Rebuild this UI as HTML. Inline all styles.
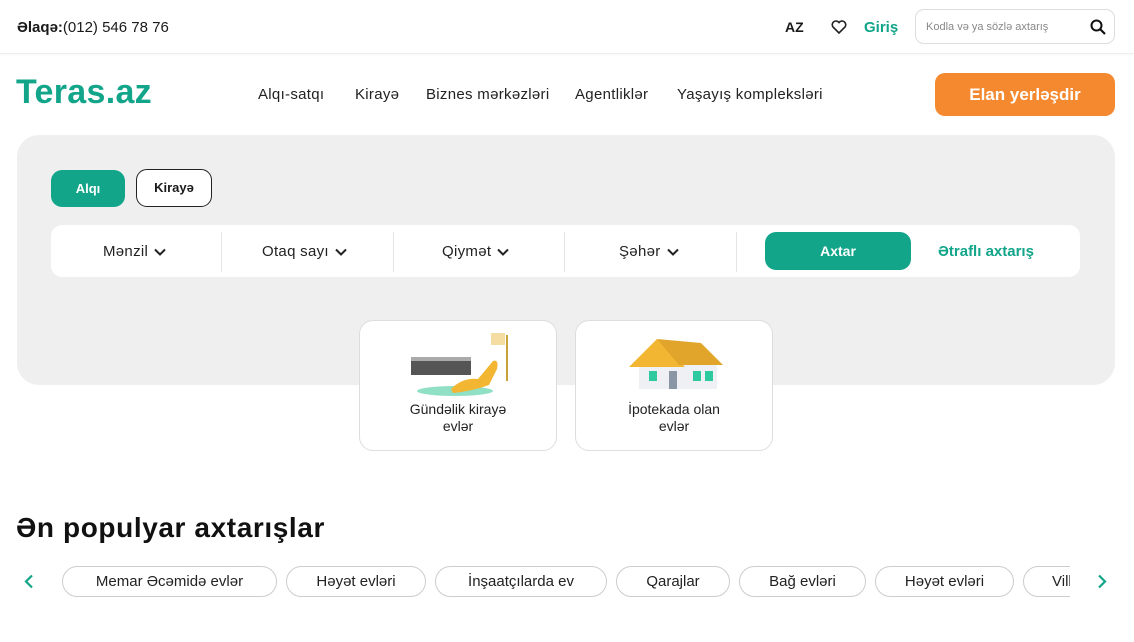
<!DOCTYPE html>
<html><head><meta charset="utf-8"><style>
*{margin:0;padding:0;box-sizing:border-box}
body{width:1134px;height:642px;overflow:hidden;background:#fff;font-family:"Liberation Sans",sans-serif;color:#1a1a1a;position:relative}
.abs{position:absolute}
.top{height:54px;border-bottom:1px solid #eee;box-shadow:0 1px 3px rgba(0,0,0,.04)}
.nav a{position:absolute;top:86px;font-size:15px;color:#222;letter-spacing:.3px}
.pill{position:absolute;border:1px solid #ccc;border-radius:16px;height:31px;top:566px;font-size:15px;display:flex;align-items:center;justify-content:center;color:#222}
.card{position:absolute;top:320px;width:198px;height:131px;border:1px solid #ddd;border-radius:14px;background:#fff;text-align:center;font-size:14px;line-height:17px;color:#222}
.f{position:absolute;top:243px;font-size:15px;color:#222;letter-spacing:.3px}
.f svg{vertical-align:middle;margin-left:6px}
.sep{position:absolute;top:232px;width:1px;height:40px;background:#e5e5e5}
</style></head><body>
<div class="abs top" style="left:0;top:0;width:1134px"></div>
<div class="abs" style="left:17px;top:19px;font-size:15px"><b>Əlaqə:</b>(012) 546 78 76</div>
<div class="abs" style="left:785px;top:19px;font-size:14px;font-weight:bold">AZ</div>
<svg class="abs" style="left:831px;top:20px" width="16" height="14" viewBox="0 0 16 14"><path d="M8 13L2 7A3.3 3.3 0 0 1 8 2.5 3.3 3.3 0 0 1 14 7Z" fill="none" stroke="#222" stroke-width="1.6"/></svg>
<div class="abs" style="left:864px;top:19px;font-size:15px;color:#12a58a;font-weight:bold">Giriş</div>
<div class="abs" style="left:915px;top:9px;width:200px;height:35px;border:1px solid #ddd;border-radius:9px;font-size:11px;color:#888;padding:11px 0 0 10px">Kodla və ya sözlə axtarış</div>
<svg class="abs" style="left:1090px;top:19px" width="16" height="16" viewBox="0 0 16 16"><circle cx="6.5" cy="6.5" r="5" fill="none" stroke="#111" stroke-width="2"/><path d="M10 10L15 15" stroke="#111" stroke-width="2.2"/></svg>
<div class="abs" style="left:16px;top:73px;font-size:34px;font-weight:bold;color:#12a58a;letter-spacing:.3px">Teras.az</div>
<div class="nav"><a style="left:258px">Alqı-satqı</a><a style="left:355px">Kirayə</a><a style="left:426px">Biznes mərkəzləri</a><a style="left:575px">Agentliklər</a><a style="left:677px">Yaşayış kompleksləri</a></div>
<div class="abs" style="left:935px;top:73px;width:180px;height:43px;background:#f5892f;border-radius:10px;color:#fff;font-weight:bold;font-size:17px;text-align:center;line-height:43px">Elan yerləşdir</div>
<div class="abs" style="left:17px;top:135px;width:1098px;height:250px;background:#efefef;border-radius:22px"></div>
<div class="abs" style="left:51px;top:170px;width:74px;height:37px;background:#12a58a;border-radius:11px;color:#fff;font-weight:bold;font-size:13px;text-align:center;line-height:37px">Alqı</div>
<div class="abs" style="left:136px;top:169px;width:76px;height:38px;border:1px solid #222;border-radius:11px;font-weight:bold;font-size:13px;text-align:center;line-height:36px;background:#fff">Kirayə</div>
<div class="abs" style="left:51px;top:225px;width:1029px;height:52px;background:#fff;border-radius:11px"></div>
<div class="f" style="left:103px">Mənzil<svg width="12" height="8" viewBox="0 0 12 8"><path d="M1 1.5L6 6.5 11 1.5" fill="none" stroke="#222" stroke-width="2"/></svg></div><div class="sep" style="left:221px"></div>
<div class="f" style="left:262px">Otaq sayı<svg width="12" height="8" viewBox="0 0 12 8"><path d="M1 1.5L6 6.5 11 1.5" fill="none" stroke="#222" stroke-width="2"/></svg></div><div class="sep" style="left:393px"></div>
<div class="f" style="left:442px">Qiymət<svg width="12" height="8" viewBox="0 0 12 8"><path d="M1 1.5L6 6.5 11 1.5" fill="none" stroke="#222" stroke-width="2"/></svg></div><div class="sep" style="left:564px"></div>
<div class="f" style="left:619px">Şəhər<svg width="12" height="8" viewBox="0 0 12 8"><path d="M1 1.5L6 6.5 11 1.5" fill="none" stroke="#222" stroke-width="2"/></svg></div><div class="sep" style="left:736px"></div>
<div class="abs" style="left:765px;top:232px;width:146px;height:38px;background:#12a58a;border-radius:11px;color:#fff;font-weight:bold;font-size:14px;text-align:center;line-height:38px">Axtar</div>
<div class="abs" style="left:938px;top:243px;font-size:15px;color:#12a58a;font-weight:bold">Ətraflı axtarış</div>
<div class="card" style="left:359px"><svg width="110" height="70" viewBox="0 0 110 70" style="margin-top:8px"><ellipse cx="52" cy="62" rx="38" ry="5" fill="#8fe0c4"/><rect x="8" y="30" width="60" height="16" fill="#555"/><rect x="8" y="28" width="60" height="4" fill="#aaa"/><path d="M48 60 Q60 48 75 50 L90 32 Q96 30 94 40 L86 56 Q70 62 50 64Z" fill="#f2b632"/><path d="M104 6 L104 52" stroke="#c9a23a" stroke-width="2"/><rect x="88" y="4" width="14" height="12" fill="#f5dca0"/></svg><div style="margin-top:-2px">Gündəlik kirayə<br>evlər</div></div>
<div class="card" style="left:575px"><svg width="110" height="70" viewBox="0 0 110 70" style="margin-top:8px"><rect x="20" y="30" width="78" height="30" fill="#eef0f4"/><path d="M10 38 L38 10 L66 38Z" fill="#f2b632"/><path d="M38 10 L82 14 L104 36 L60 36Z" fill="#e0a52a"/><rect x="30" y="42" width="8" height="10" fill="#2fc9a0"/><rect x="74" y="42" width="8" height="10" fill="#2fc9a0"/><rect x="86" y="42" width="8" height="10" fill="#2fc9a0"/><rect x="50" y="42" width="8" height="18" fill="#8a96a6"/></svg><div style="margin-top:-2px">İpotekada olan<br>evlər</div></div>
<div class="abs" style="left:16px;top:512px;font-size:28px;font-weight:bold;color:#111;letter-spacing:.6px">Ən populyar axtarışlar</div>
<svg class="abs" style="left:24px;top:574px" width="10" height="15" viewBox="0 0 10 15"><path d="M8 1.5L2 7.5 8 13.5" fill="none" stroke="#12a58a" stroke-width="2.2"/></svg>
<svg class="abs" style="left:1097px;top:574px" width="10" height="15" viewBox="0 0 10 15"><path d="M2 1.5L8 7.5 2 13.5" fill="none" stroke="#12a58a" stroke-width="2.2"/></svg>
<div class="pill" style="left:62px;width:215px">Memar Əcəmidə evlər</div>
<div class="pill" style="left:286px;width:140px">Həyət evləri</div>
<div class="pill" style="left:435px;width:172px">İnşaatçılarda ev</div>
<div class="pill" style="left:616px;width:114px">Qarajlar</div>
<div class="pill" style="left:739px;width:127px">Bağ evləri</div>
<div class="pill" style="left:875px;width:139px">Həyət evləri</div>
<div class="abs" style="left:1023px;top:566px;width:47px;height:31px;overflow:hidden"><div class="pill" style="left:0;top:0;width:100px;justify-content:flex-start;padding-left:28px">Villa</div></div>
</body></html>
